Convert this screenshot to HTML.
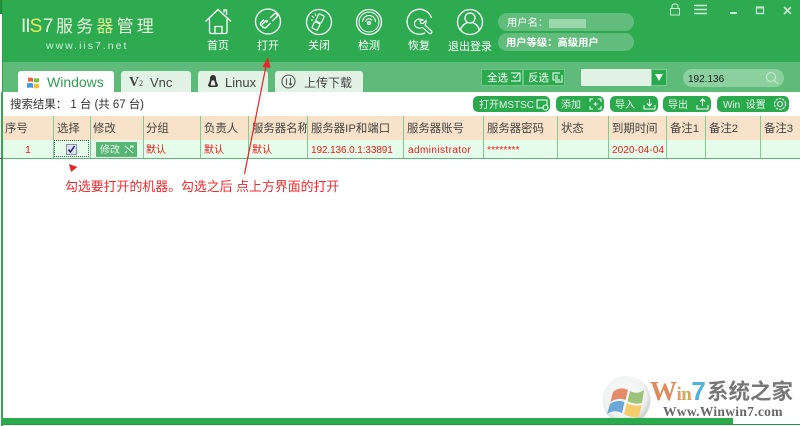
<!DOCTYPE html>
<html><head><meta charset="utf-8">
<style>
html,body{margin:0;padding:0;background:#fff}
#p{position:relative;width:800px;height:426px;overflow:hidden;background:#fff;font-family:"Liberation Sans","Noto Sans CJK SC",sans-serif;font-size:11px;color:#333}
#p div{position:absolute;white-space:nowrap}
svg{position:absolute;overflow:visible}
.nav{color:#fff;font-size:11px;top:39px;text-align:center;line-height:14px}
.tab{top:71px;height:21px;background:#e2f3e6;border-radius:3px 3px 0 0;line-height:21px;font-size:13px;color:#444}
.tab span{top:1px}
.btn{top:96px;height:16px;background:#2baa4d;border-radius:5px;color:#e8f6ec;font-size:10px;line-height:16px}
.btn span{top:2px}
.th{top:116px;height:24px;line-height:27px;font-size:11.4px;color:#444;padding-left:3px}
.td{top:140px;height:18px;line-height:21px;font-size:10px;color:#f01818;padding-left:2px}
.sep{width:1px;background:#7fcb93;top:116px;height:42px}
.pill{left:498px;width:136px;height:18px;border-radius:9px;background:#62bd7c;color:#fff;font-size:10.3px;line-height:18px}
.pill span{top:2px}
.sel{top:69px;width:42px;height:17px;background:#2baa4d;border:1px solid #6fc587;box-sizing:border-box;color:#fff;font-size:10.5px;line-height:15px}
.sel span{top:1px}
</style></head>
<body><div id="p">
<!-- header -->
<div style="left:3px;top:0;width:797px;height:62px;background:#2eab51"></div>
<div style="left:3px;top:62px;width:797px;height:30px;background:#5ebb79"></div>
<div style="left:0;top:0;width:3px;height:14px;background:#1f8f3a"></div>
<div style="left:2px;top:0;width:1px;height:426px;background:#2aa648"></div>
<div style="left:1px;top:92px;width:2px;height:334px;background:#33a84f"></div>

<!-- logo -->
<div style="left:21px;top:15px;font-size:19px;line-height:24px;color:#e8f5dd;letter-spacing:0.5px"><span style="letter-spacing:-1px">II</span><span style="color:#e4ef62">S</span><span>7</span></div>
<div style="left:56px;top:15px;font-size:17px;line-height:24px;color:#e8f5dd;letter-spacing:3.2px">服务<span style="color:#dcef90">器</span>管理</div>
<div style="left:46px;top:39px;font-size:10.5px;line-height:14px;color:#cfeed8;letter-spacing:2px">www.iis7.net</div>

<!-- nav icons -->
<svg style="left:0;top:0" width="800" height="62" fill="none" stroke="#fff" stroke-width="1.3">
 <path d="M205.500 21.500L218 9.500L231 21.500M209.500 19V31.500Q209.500 33.500 211.500 33.500H225Q227 33.500 227 31.500V19M215 33V26.500H222V33M224 12.500V10H226.500V15"/>
 <circle cx="268" cy="21.500" r="12.500"/>
 <path d="M262 24.500L266.500 20M263.500 27.500L260.800 25Q259.800 23.800 261 22.500L264 19.500M270 18L274.500 13.800Q275.500 13 276.500 14L277 14.500Q278 15.500 277 16.500L272.500 21M268 20.500L266 22.500M263.500 27.500Q265 28.500 266 27.500L270.500 23"/>
 <circle cx="319" cy="22" r="12.500"/>
 <rect x="317" y="14.500" width="6" height="8" rx="1" transform="rotate(25 320 18.500)" stroke-width="1.100"/>
 <rect x="313" y="22.500" width="6" height="7" rx="1" transform="rotate(25 316 26)" stroke-width="1.100"/>
 <path d="M312 16L314 18M315 13.500L316 16M311 20H313" stroke-width="1"/>
 <circle cx="369" cy="22" r="12.500"/><circle cx="369" cy="22" r="10" stroke-width="1"/><path d="M362.500 22A6.500 6.500 0 0 1 375.500 22" stroke-width="1"/><path d="M365.500 22A3.500 3.500 0 0 1 372 20.500" stroke-width="1"/><circle cx="369" cy="23" r="1.400"/>
 <path d="M431.500 18A12.500 12.500 0 1 0 425 33"/>
 <path d="M423 20Q418 17.500 415 21.500Q413.500 25 416 27Q419 29 422.500 27.500L429.500 33.500Q431.500 34 432 32Q432 31 431 30.500L425 25Q426.500 22.500 426 20.500L423 23.500L420.500 23L420 21Z" stroke-width="1.100"/>
 <circle cx="470" cy="22" r="12.500"/><circle cx="470" cy="18" r="5"/><path d="M460.500 30Q462.500 24 467 23M479.500 30Q477.500 24 473 23"/>
 <path d="M672 8.500V6Q672 4 675 4Q678 4 678 6V8.500M670.500 8.500H679.500V15H670.500ZM675 11.500H675.100" stroke="#cdeed6" stroke-width="1"/>
 <path d="M694 5.500H707M694 9.500H707M694 13.500H707" stroke="#cdeed6" stroke-width="1.400"/>
 <path d="M730 13H737" stroke="#c9ebd2" stroke-width="2"/>
 <path d="M756.500 7H763.500V13.500H756.500Z" stroke="#c9ebd2" stroke-width="1.200"/><path d="M756.500 7.500H763.500" stroke="#c9ebd2" stroke-width="2"/>
 <path d="M784 7L791 14M791 7L784 14" stroke="#c9ebd2" stroke-width="1.700"/>
</svg>
<div class="nav" style="left:198px;width:40px">首页</div>
<div class="nav" style="left:248px;width:40px">打开</div>
<div class="nav" style="left:299px;width:40px">关闭</div>
<div class="nav" style="left:349px;width:40px">检测</div>
<div class="nav" style="left:399px;width:40px">恢复</div>
<div class="nav" style="left:445px;width:50px;top:40px">退出登录</div>

<!-- user -->
<div class="pill" style="top:13px"><span style="position:absolute;left:9px">用户名：</span></div>
<div style="left:549px;top:19px;width:37px;height:9px;background:#9bd7ac"></div>
<div class="pill" style="top:33px;font-weight:bold"><span style="position:absolute;left:8px">用户等级：高级用户</span></div>

<!-- tabs -->
<div class="tab" style="left:18px;width:96px;background:#fff;color:#2f9e52;font-size:14px"><span style="position:absolute;left:29px">Windows</span>
<svg style="left:9px;top:5px" width="13" height="13"><path d="M1 2Q3 1 6 2V6Q3 5 1 6Z" fill="#e9663c"/><path d="M7 2Q9 3 12 2V6Q9 7 7 6Z" fill="#7cbc3f"/><path d="M0 7.500Q3 6.500 6 7.500V12Q3 11 0 12Z" fill="#3d9ae0"/><path d="M7 7.500Q9 8.500 12 7.500V12Q9 13 7 12Z" fill="#f2c037"/></svg></div>
<div class="tab" style="left:121px;width:70px"><span style="position:absolute;left:8px;font-weight:bold;font-size:14px;font-family:'Liberation Serif',serif">V<span style="font-size:8px;font-weight:normal;top:0">2</span></span><span style="position:absolute;left:29px">Vnc</span></div>
<div class="tab" style="left:198px;width:70px"><span style="position:absolute;left:27px">Linux</span>
<svg style="left:9px;top:3px" width="12" height="15"><path d="M6 1Q9 1 9 5Q9 7 11 11Q11 13 8.500 13H3.500Q1 13 1 11Q3 7 3 5Q3 1 6 1Z" fill="#333"/><path d="M4.500 7Q6 5.500 7.500 7L8.500 11.500H3.500Z" fill="#eee"/></svg></div>
<div class="tab" style="left:275px;width:88px"><span style="position:absolute;left:29px;font-size:12px;top:2px">上传下载</span>
<svg style="left:6px;top:3px" width="15" height="15" fill="none" stroke="#555" stroke-width="1.100"><circle cx="7.500" cy="7.500" r="6.500"/><path d="M5.500 4.500V11M9.500 4V11M8 9.500L9.500 11L11 9.500"/></svg></div>

<!-- select buttons -->
<div class="sel" style="left:481px"><span style="position:absolute;left:5px">全选</span>
<svg style="left:28px;top:2px" width="11" height="10" fill="none" stroke="#fff" stroke-width="1"><path d="M1 1H10V9H1M3 4L5 6L9 1"/></svg></div>
<div class="sel" style="left:523px"><span style="position:absolute;left:4px">反选</span>
<svg style="left:28px;top:2px" width="11" height="10" fill="none" stroke="#fff" stroke-width="1"><path d="M8 1H1V8H8M3 4H6M3 6H6M10 3V10H3"/></svg></div>

<!-- dropdown -->
<div style="left:581px;top:69px;width:70px;height:17px;background:#e2f3e6"></div>
<div style="left:651px;top:69px;width:16px;height:17px;background:#2baa4d;border:1px solid #82cb96;box-sizing:border-box"></div>
<svg style="left:655px;top:74px" width="9" height="8"><path d="M0 0H8L4 7Z" fill="#e8f6ec"/></svg>

<!-- search -->
<div style="left:683px;top:69px;width:101px;height:18px;border-radius:9px;background:#8bd09e;line-height:18px;font-size:10px;color:#222"><span style="position:absolute;left:5px;top:2px">192.136</span></div>
<svg style="left:765px;top:71px" width="14" height="14" fill="none" stroke="#c2e8cd" stroke-width="1.200"><circle cx="6" cy="6" r="4.500"/><path d="M9.500 9.500L13 13"/></svg>

<!-- result line -->
<div style="left:10px;top:98px;font-size:11.500px;line-height:15px;color:#333;letter-spacing:-.05px">搜索结果： 1 台 (共 67 台)</div>

<!-- buttons -->
<div class="btn" style="left:473px;width:77px"><span style="position:absolute;left:6px">打开MSTSC</span>
<svg style="left:62px;top:2px" width="14" height="13" fill="none" stroke="#fff" stroke-width="1"><path d="M9 10H2V2H12V7"/><circle cx="10.500" cy="9.500" r="2.500"/></svg></div>
<div class="btn" style="left:556px;width:48px"><span style="position:absolute;left:5px">添加</span>
<svg style="left:33px;top:2px" width="13" height="12" fill="none" stroke="#fff" stroke-width="1"><path d="M1 4V1H4M9 1H12V4M12 8V11H9M4 11H1V8M6.500 4V8M4.500 6H8.500"/></svg></div>
<div class="btn" style="left:610px;width:48px"><span style="position:absolute;left:5px">导入</span>
<svg style="left:33px;top:2px" width="13" height="12" fill="none" stroke="#fff" stroke-width="1"><path d="M1 7V11H12V7M6.500 1V8M4 5.500L6.500 8L9 5.500"/></svg></div>
<div class="btn" style="left:663px;width:48px"><span style="position:absolute;left:5px">导出</span>
<svg style="left:33px;top:2px" width="13" height="12" fill="none" stroke="#fff" stroke-width="1"><path d="M1 7V11H12V7M6.500 8V1M4 3.500L6.500 1L9 3.500"/></svg></div>
<div class="btn" style="left:717px;width:72px"><span style="position:absolute;left:6px">Win&nbsp; 设置</span>
<svg style="left:56px;top:1px" width="14" height="14" fill="none" stroke="#fff" stroke-width="1"><circle cx="7" cy="7" r="2.500"/><circle cx="7" cy="7" r="5.500" stroke-dasharray="2.500 1"/></svg></div>

<!-- table -->
<div style="left:3px;top:116px;width:797px;height:24px;background:#f8e2c9"></div>
<div style="left:3px;top:140px;width:797px;height:18px;background:#e5fcea"></div>
<div style="left:3px;top:158px;width:797px;height:1px;background:#58b873"></div>
<div style="left:0;top:158px;width:3px;height:1px;background:#555"></div>

<div class="sep" style="left:53px"></div><div class="sep" style="left:90px"></div><div class="sep" style="left:143px"></div><div class="sep" style="left:200px"></div><div class="sep" style="left:248px"></div><div class="sep" style="left:307px"></div><div class="sep" style="left:403px"></div><div class="sep" style="left:483px"></div><div class="sep" style="left:557px"></div><div class="sep" style="left:608px"></div><div class="sep" style="left:666px"></div><div class="sep" style="left:705px"></div><div class="sep" style="left:760px"></div>

<div class="th" style="left:2px">序号</div><div class="th" style="left:54px">选择</div><div class="th" style="left:90px">修改</div><div class="th" style="left:143px">分组</div><div class="th" style="left:201px">负责人</div><div class="th" style="left:249px;width:55px;overflow:hidden">服务器名称</div><div class="th" style="left:308px">服务器IP和端口</div><div class="th" style="left:404px">服务器账号</div><div class="th" style="left:484px">服务器密码</div><div class="th" style="left:558px">状态</div><div class="th" style="left:609px">到期时间</div><div class="th" style="left:667px">备注1</div><div class="th" style="left:706px">备注2</div><div class="th" style="left:761px">备注3</div>

<div class="td" style="left:23px;font-size:10.500px">1</div>
<div style="left:54px;top:140px;width:35px;height:17px;border:1px dotted #3c6a4a;box-sizing:border-box"></div>
<div style="left:66px;top:144px;width:11px;height:11px;background:#dfe0ee;border:1px solid #8a8fa8;box-sizing:border-box"></div>
<svg style="left:67px;top:145px" width="9" height="9"><path d="M1.500 4.500L3.500 7L7.500 1" fill="none" stroke="#1a237e" stroke-width="1.500"/></svg>
<div style="left:96px;top:142px;width:41px;height:15px;background:#57b673;color:#e9f7ed;font-size:10px;line-height:15px"><span style="position:absolute;left:4px;top:1px">修改</span><svg style="left:28px;top:3px" width="10" height="9" fill="none" stroke="#e9f7ed" stroke-width="1"><path d="M1 1L9 8M8 1L6 3M1 8L3 6M6 1H9V3"/></svg></div>
<div class="td" style="left:144px">默认</div><div class="td" style="left:202px">默认</div><div class="td" style="left:250px">默认</div>
<div class="td" style="left:309px;letter-spacing:-.1px">192.136.0.1:33891</div>
<div class="td" style="left:406px;letter-spacing:.42px">administrator</div>
<div class="td" style="left:485px;letter-spacing:.2px">********</div>
<div class="td" style="left:610px;letter-spacing:.1px">2020-04-04</div>

<!-- annotation -->
<div style="left:65px;top:178px;font-size:12.900px;line-height:18px;color:#f0282c">勾选要打开的机器。勾选之后 点上方界面的打开</div>
<svg style="left:0;top:0" width="800" height="426">
 <path d="M244.500 174L266 66" stroke="#e8232c" stroke-width="1.200" fill="none"/>
 <path d="M268 57L262.500 67L270.500 68Z" fill="#e8232c"/>
 <path d="M69 164L77.500 167L71 172Z" fill="#e8232c"/>
</svg>

<!-- watermark -->
<svg style="left:601px;top:376px" width="50" height="50">
 <defs><radialGradient id="g" cx=".45" cy=".4" r=".6"><stop offset="0" stop-color="#fafafa"/><stop offset=".75" stop-color="#f0f2f1"/><stop offset="1" stop-color="#c6cdcb"/></radialGradient></defs>
 <circle cx="25.500" cy="24" r="24" fill="url(#g)"/>
 <path d="M12 16Q19 10 27 14L24.500 24Q17 21 9.500 26Z" fill="#e58a6b"/>
 <path d="M29 15Q36 19 43 14L41 27Q33 29 26.500 25Z" fill="#9dc47a"/>
 <path d="M9 28Q16 23 23.500 26L21 37Q13 33 6 38Z" fill="#6aa7d8"/>
 <path d="M26 27Q33 31 40.500 29L38 41Q30 42 23 38Z" fill="#f5cd6a"/>
</svg>
<div style="left:650px;top:375px;font:bold 27px/32px 'Liberation Serif',serif;color:#dd8a5f;letter-spacing:-.5px">W<span style="font-size:19px;color:#d9a45a">in</span><span style="color:#4cb3dc;font-family:'Liberation Sans',sans-serif;font-size:26px">7</span></div>
<div style="left:707px;top:378px;font:bold 21.500px/26px 'Noto Sans CJK SC',sans-serif;color:#777;letter-spacing:0">系统之家</div>
<div style="left:663px;top:405px;font:bold 13.500px/14px 'Liberation Serif',serif;color:#666;letter-spacing:.3px">Www.Winwin7.com</div>

<!-- bottom bar -->
<div style="left:3px;top:418px;width:730px;height:7px;background:#2aab4c"></div>
<div style="left:3px;top:424px;width:797px;height:1px;background:#1f9a3e"></div>
</div></body></html>
